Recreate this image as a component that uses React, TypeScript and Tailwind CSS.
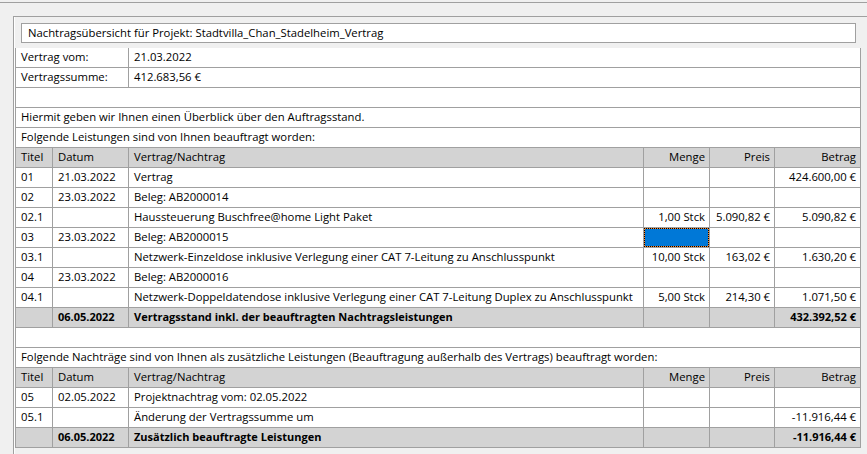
import React from "react";

const W = ["w-[37px]", "w-[76px]", "w-[515px]", "w-[66px]", "w-[65px]", "w-[86px]"];

type Cell = { t?: string; right?: boolean; sel?: boolean };

const base =
  "h-[20px] shrink-0 border-r border-b border-[#a0a0a0] flex items-center whitespace-nowrap overflow-hidden";

function Row({ cells, bold, header }: { cells: Cell[]; bold?: boolean; header?: boolean }) {
  return (
    <div
      className={`flex ${bold || header ? "bg-[#d3d3d3]" : "bg-white"} ${
        bold ? "font-bold text-[11px]" : ""
      }`}
    >
      {cells.map((c, i) => (
        <div
          key={i}
          className={`${base} ${W[i]} ${
            c.sel ? "p-0" : c.right ? "justify-end pr-[4px] pl-[2px]" : "pl-[5px] pr-[2px]"
          }`}
        >
          {c.sel ? (
            <div className="w-full h-full bg-[#ff8728] border border-dotted border-black">
              <div className="w-full h-full bg-[#0078d7]" />
            </div>
          ) : (
            c.t
          )}
        </div>
      ))}
    </div>
  );
}

function Full({ t }: { t?: string }) {
  return <div className={`${base} w-[845px] bg-white pl-[5px]`}>{t}</div>;
}

function Header() {
  return (
    <Row
      header
      cells={[
        { t: "Titel" },
        { t: "Datum" },
        { t: "Vertrag/Nachtrag" },
        { t: "Menge", right: true },
        { t: "Preis", right: true },
        { t: "Betrag", right: true },
      ]}
    />
  );
}

const r = (a: string, b: string, c: string, d = "", e = "", f = "", sel = false): Cell[] => [
  { t: a },
  { t: b },
  { t: c },
  sel ? { sel: true } : { t: d, right: true },
  { t: e, right: true },
  { t: f, right: true },
];

export default function App() {
  return (
    <div
      className="w-[867px] h-[454px] bg-[#f0f0f0] overflow-hidden text-[11.3px] text-black"
      style={{ fontFamily: '"Open Sans", "Noto Sans", sans-serif' }}
    >
      <div className="h-[2px]" />
      <div className="border-t border-[#a0a0a0] h-[14px]" />
      <div className="ml-[13px] border-t border-l border-[#a0a0a0] h-[440px]">
        <div className="border-l border-white h-full">
          <div className="pt-[6px] pb-[5px] pl-[6px]">
            <div className="w-[835px] h-[20px] border border-[#a0a0a0] bg-white flex items-center pl-[6px]">
              Nachtragsübersicht für Projekt: Stadtvilla_Chan_Stadelheim_Vertrag
            </div>
          </div>
          <div className="w-[846px] border-l border-[#a0a0a0]">
            <div className="flex bg-white">
              <div className={`${base} w-[113px] pl-[5px]`}>Vertrag vom:</div>
              <div className={`${base} w-[732px] pl-[5px]`}>21.03.2022</div>
            </div>
            <div className="flex bg-white">
              <div className={`${base} w-[113px] pl-[5px]`}>Vertragssumme:</div>
              <div className={`${base} w-[732px] pl-[5px]`}>412.683,56 €</div>
            </div>
            <Full />
            <Full t="Hiermit geben wir Ihnen einen Überblick über den Auftragsstand." />
            <Full t="Folgende Leistungen sind von Ihnen beauftragt worden:" />
            <Header />
            <Row cells={r("01", "21.03.2022", "Vertrag", "", "", "424.600,00 €")} />
            <Row cells={r("02", "23.03.2022", "Beleg: AB2000014")} />
            <Row
              cells={r("02.1", "", "Haussteuerung Buschfree@home Light Paket", "1,00 Stck", "5.090,82 €", "5.090,82 €")}
            />
            <Row cells={r("03", "23.03.2022", "Beleg: AB2000015", "", "", "", true)} />
            <Row
              cells={r(
                "03.1",
                "",
                "Netzwerk-Einzeldose inklusive Verlegung einer CAT 7-Leitung zu Anschlusspunkt",
                "10,00 Stck",
                "163,02 €",
                "1.630,20 €"
              )}
            />
            <Row cells={r("04", "23.03.2022", "Beleg: AB2000016")} />
            <Row
              cells={r(
                "04.1",
                "",
                "Netzwerk-Doppeldatendose inklusive Verlegung einer CAT 7-Leitung Duplex zu Anschlusspunkt",
                "5,00 Stck",
                "214,30 €",
                "1.071,50 €"
              )}
            />
            <Row
              bold
              cells={r("", "06.05.2022", "Vertragsstand inkl. der beauftragten Nachtragsleistungen", "", "", "432.392,52 €")}
            />
            <Full />
            <Full t="Folgende Nachträge sind von Ihnen als zusätzliche Leistungen (Beauftragung außerhalb des Vertrags) beauftragt worden:" />
            <Header />
            <Row cells={r("05", "02.05.2022", "Projektnachtrag vom: 02.05.2022")} />
            <Row cells={r("05.1", "", "Änderung der Vertragssumme um", "", "", "-11.916,44 €")} />
            <Row
              bold
              cells={r("", "06.05.2022", "Zusätzlich beauftragte Leistungen", "", "", "-11.916,44 €")}
            />
          </div>
        </div>
      </div>
    </div>
  );
}
